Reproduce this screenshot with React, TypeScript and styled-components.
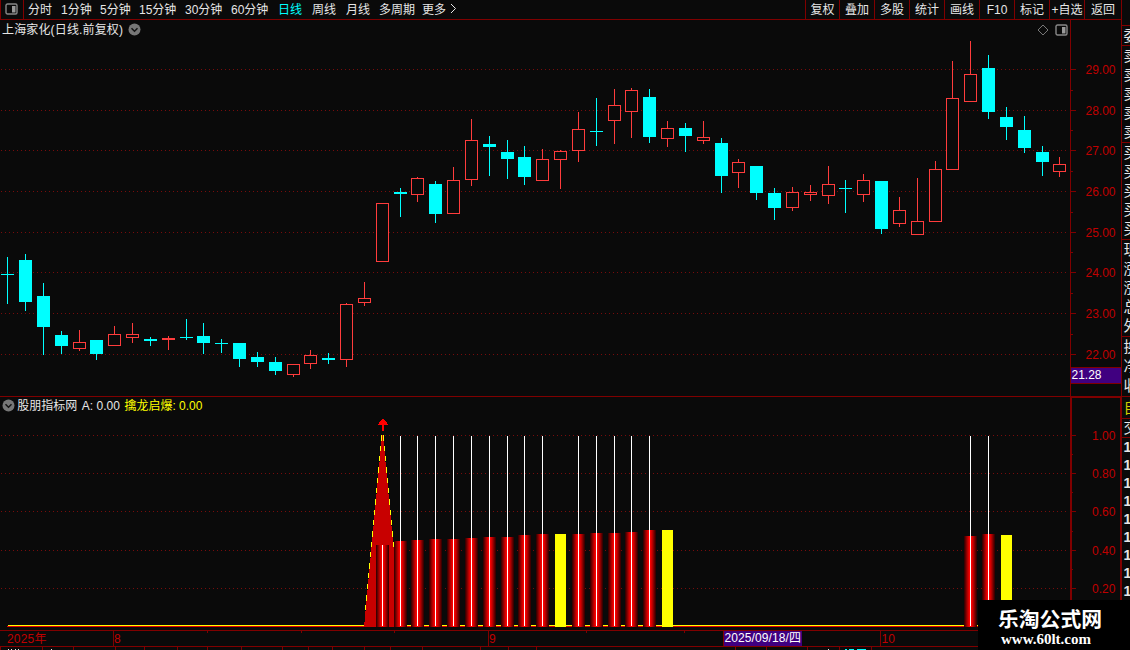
import styled, { createGlobalStyle } from 'styled-components';

const BG = '#0a0a0a';
const LINE = '#800000';
const UP = '#ff3c3c';
const DOWN = '#00ffff';
const LABEL = '#c00000';
const FONT = "'Liberation Sans', 'Noto Sans CJK SC', sans-serif";

const GlobalStyle = createGlobalStyle`
  body {
    margin: 0;
    overflow: hidden;
    background: ${BG};
  }

  * {
    box-sizing: border-box;
  }
`;

const Screen = styled.div`
  position: relative;
  display: flex;
  width: 1130px;
  height: 650px;
  overflow: hidden;
  background: ${BG};
  color: #e6e6e6;
  font: 12px/16px ${FONT};
  white-space: nowrap;

  svg {
    display: block;
    flex: none;
  }
`;

const Terminal = styled.div`
  display: flex;
  flex-direction: column;
  flex: none;
  width: 1121px;
`;

const Toolbar = styled.div`
  display: flex;
  flex: none;
  height: 20px;
  border-bottom: 1px solid ${LINE};
  border-left: 1px solid ${LINE};
  line-height: 20px;
`;

const LayoutToggle = styled.div`
  display: flex;
  width: 23px;
  padding: 3px 0 0 4px;
  border-right: 1px solid ${LINE};
`;

const PeriodList = styled.div`
  display: flex;
  flex: 1;
  padding-left: 4px;
`;

const Period = styled.span<{ $width: number; $active?: boolean }>`
  flex: none;
  width: ${({ $width }) => $width}px;
  color: ${({ $active }) => ($active ? DOWN : '#e6e6e6')};
`;

const Tool = styled.div<{ $width: number }>`
  width: ${({ $width }) => $width}px;
  border-left: 1px solid ${LINE};
  text-align: center;
`;

const Panel = styled.div<{ $height: number }>`
  display: flex;
  flex: none;
  height: ${({ $height }) => $height}px;
`;

const PricePanel = styled(Panel)`
  border-bottom: 1px solid ${LINE};
`;

const Plot = styled.div`
  display: flex;
  flex-direction: column;
  width: 1070px;
`;

const PlotTitle = styled.div<{ $height: number }>`
  display: flex;
  align-items: center;
  flex: none;
  height: ${({ $height }) => $height}px;
  padding-left: 2px;
`;

const TitleText = styled.span<{ $color?: string; $gap?: number; $spacing?: number }>`
  margin-right: ${({ $gap = 4.5 }) => $gap}px;
  color: ${({ $color = '#e6e6e6' }) => $color};
  letter-spacing: ${({ $spacing = 0 }) => $spacing}px;
`;

const TitleTools = styled.div`
  display: flex;
  align-items: center;
  gap: 6px;
  margin-left: auto;
  padding-right: 2px;
`;

const QuoteStrip = styled.div`
  flex: none;
  width: 9px;
  overflow: hidden;
  border-left: 1px solid ${LINE};
`;

const QuoteGroup = styled.div<{ $height: number; $color?: string }>`
  display: flex;
  flex-direction: column;
  justify-content: space-around;
  height: ${({ $height }) => $height}px;
  padding-left: 1.5px;
  border-bottom: 1px solid ${LINE};
  color: ${({ $color = '#e6e6e6' }) => $color};
  font-size: 15px;
  line-height: 18px;
`;

const TickList = styled.div`
  padding-left: 1.5px;
  font-size: 14px;
  font-weight: bold;
  line-height: 18px;
`;

const Watermark = styled.div`
  position: absolute;
  right: 0;
  bottom: 0;
  width: 152px;
  height: 50px;
  padding: 7px 0 0 20px;
  background: #000;
  color: #fff;
`;

const SiteName = styled.div`
  font: bold 20.8px/23px 'Noto Sans CJK SC', sans-serif;
`;

const SiteUrl = styled.div`
  padding-left: 3px;
  font: bold 15px/18px 'Liberation Serif', serif;
`;

type Candle = [x: number, high: number, top: number, bottom: number, low: number, up: 0 | 1];

const candles: Candle[] = [
  [7, 257, 274, 275, 304, 0],
  [25, 254, 260, 302, 311, 0],
  [43, 283, 296, 327, 355, 0],
  [61, 331, 335, 346, 354, 0],
  [79, 330, 342, 349, 351, 1],
  [96, 340, 340, 354, 360, 0],
  [114, 326, 334, 346, 346, 1],
  [132, 323, 334, 338, 343, 1],
  [150, 337, 339, 341, 346, 0],
  [168, 336, 338, 340, 350, 1],
  [186, 319, 337, 338, 340, 0],
  [203, 323, 336, 343, 354, 0],
  [221, 339, 343, 344, 353, 0],
  [239, 343, 343, 359, 367, 0],
  [257, 352, 357, 362, 367, 0],
  [275, 357, 362, 371, 375, 0],
  [293, 364, 364, 375, 377, 1],
  [310, 350, 355, 364, 369, 1],
  [328, 353, 358, 360, 364, 0],
  [346, 303, 304, 360, 367, 1],
  [364, 282, 298, 303, 306, 1],
  [382, 203, 203, 262, 262, 1],
  [400, 188, 192, 194, 217, 0],
  [417, 177, 178, 195, 202, 1],
  [435, 181, 184, 214, 223, 0],
  [453, 167, 180, 214, 214, 1],
  [471, 119, 140, 180, 186, 1],
  [489, 136, 144, 147, 176, 0],
  [507, 140, 152, 159, 179, 0],
  [524, 146, 157, 177, 185, 0],
  [542, 149, 159, 181, 181, 1],
  [560, 150, 151, 160, 189, 1],
  [578, 112, 129, 151, 162, 1],
  [596, 98, 131, 132, 146, 0],
  [614, 89, 105, 121, 144, 1],
  [631, 88, 90, 112, 138, 1],
  [649, 89, 97, 137, 143, 0],
  [667, 121, 128, 139, 147, 1],
  [685, 123, 128, 136, 152, 0],
  [703, 121, 137, 141, 144, 1],
  [721, 138, 143, 176, 193, 0],
  [738, 159, 162, 173, 188, 1],
  [756, 166, 166, 193, 200, 0],
  [774, 188, 193, 208, 220, 0],
  [792, 187, 192, 208, 211, 1],
  [810, 185, 192, 195, 201, 1],
  [828, 166, 184, 196, 204, 1],
  [845, 180, 188, 189, 213, 0],
  [863, 174, 180, 195, 202, 1],
  [881, 181, 181, 229, 234, 0],
  [899, 197, 210, 224, 227, 1],
  [917, 178, 221, 235, 235, 1],
  [935, 161, 169, 222, 222, 1],
  [952, 61, 98, 170, 170, 1],
  [970, 41, 74, 102, 102, 1],
  [988, 55, 68, 112, 119, 0],
  [1006, 107, 117, 127, 140, 0],
  [1024, 116, 130, 148, 153, 0],
  [1042, 146, 152, 162, 176, 0],
  [1059, 157, 164, 172, 177, 1],
];

const redBars: [x: number, top: number][] = [
  [382, 545],
  [400, 541],
  [417, 540],
  [435, 539],
  [453, 539],
  [471, 538],
  [489, 537],
  [507, 537],
  [524, 535],
  [542, 534],
  [578, 534],
  [596, 533],
  [614, 533],
  [631, 532],
  [649, 530],
  [970, 536],
  [988, 534],
];

const yellowBars: [x: number, top: number][] = [
  [555, 534],
  [662, 530],
  [1001, 535],
];

const priceTicks: [y: number, label: string][] = [
  [69, '29.00'],
  [110, '28.00'],
  [150, '27.00'],
  [191, '26.00'],
  [232, '25.00'],
  [272, '24.00'],
  [313, '23.00'],
  [354, '22.00'],
];

const indicatorTicks: [y: number, label: string][] = [
  [435, '1.00'],
  [473, '0.80'],
  [511, '0.60'],
  [550, '0.40'],
  [588, '0.20'],
];

const periods: [label: string, width: number][] = [
  ['分时', 33],
  ['1分钟', 39],
  ['5分钟', 39],
  ['15分钟', 46],
  ['30分钟', 46],
  ['60分钟', 47],
  ['日线', 34],
  ['周线', 34],
  ['月线', 33],
  ['多周期', 43],
  ['更多', 28],
];

const tools: [label: string, width: number][] = [
  ['复权', 34],
  ['叠加', 35],
  ['多股', 35],
  ['统计', 35],
  ['画线', 35],
  ['F10', 35],
  ['标记', 35],
  ['+自选', 35],
  ['返回', 37],
];

// shades of a histogram bar, left edge to centre
const barShades = ['#3c0000', '#640000', '#8c0000', '#b40000', '#d80000', '#f80000', '#ff0000'];

const SplitIcon = () => (
  <svg width='13' height='12' viewBox='0 0 13 12'>
    <rect x='1' y='1' width='11' height='10' rx='1.5' fill='none' stroke='#888' strokeWidth='1.4' />
    <rect x='7' y='3' width='3.5' height='6.5' fill='#999' />
  </svg>
);

const DiamondIcon = () => (
  <svg width='12' height='12' viewBox='0 0 12 12'>
    <path d='M6 1 L11 6 L6 11 L1 6 Z' fill='none' stroke='#777' />
  </svg>
);

const DropIcon = () => (
  <svg width='13' height='13' viewBox='0 0 13 13'>
    <circle cx='6.5' cy='6.5' r='6' fill='#777' />
    <path d='M3.5 5.2 L6.5 8.2 L9.5 5.2' fill='none' stroke='#141414' strokeWidth='1.5' />
  </svg>
);

const MoreIcon = () => (
  <svg width='8' height='18' viewBox='0 0 8 18'>
    <path d='M1 4 L5.5 8.5 L1 13' fill='none' stroke='#e6e6e6' />
  </svg>
);

const GridLine = ({ y }: { y: number }) => (
  <line x1='1' x2='1067' y1={y + 0.5} y2={y + 0.5} stroke='#780c0c' strokeDasharray='1 3' />
);

const CandleShape = ({ candle }: { candle: Candle }) => {
  const [x, high, top, bottom, low, up] = candle;
  const color = up ? UP : DOWN;
  const hollow = up && bottom - top > 2;

  return (
    <g>
      <rect x={x} y={high} width='1' height={low - high} fill={color} />
      <rect x={x - 6} y={top} width='13' height={bottom - top} fill={color} />
      {hollow && <rect x={x - 5} y={top + 1} width='11' height={bottom - top - 2} fill={BG} />}
    </g>
  );
};

const PriceChart = () => (
  <svg width='1070' height='357' viewBox='0 39 1070 357' shapeRendering='crispEdges'>
    {priceTicks.map(([y]) => (
      <GridLine key={y} y={y} />
    ))}
    {candles.map((candle) => (
      <CandleShape key={candle[0]} candle={candle} />
    ))}
  </svg>
);

const PriceAxis = () => (
  <svg width='51' height='376' viewBox='1070 20 51 376' fontFamily={FONT} fontSize='12'>
    <g fill={LINE} shapeRendering='crispEdges'>
      <rect x='1070' y='20' width='1' height='376' />
      {priceTicks.map(([y]) => (
        <rect key={y} x='1071' y={y} width='5' height='1' />
      ))}
      {[90, 130, 171, 212, 252, 293, 334].map((y) => (
        <rect key={y} x='1071' y={y} width='2' height='1' />
      ))}
      <rect x='1071' y='367' width='50' height='17' />
      <rect x='1071' y='368' width='50' height='15' fill='#400080' />
    </g>
    {priceTicks.map(([y, label]) => (
      <text key={y} x='1085.5' y={y + 5} fill={LABEL}>
        {label}
      </text>
    ))}
    <text x='1071.5' y='379' fill='#fff'>
      21.28
    </text>
  </svg>
);

const IndicatorChart = () => (
  <svg width='1070' height='216' viewBox='0 414 1070 216' shapeRendering='crispEdges'>
    {indicatorTicks.map(([y]) => (
      <GridLine key={y} y={y} />
    ))}
    <rect x='8' y='625' width='1062' height='1' fill='#ffff00' />
    <rect x='7' y='626' width='1063' height='1' fill='#e00000' />

    <polygon points='382,435 383,435 401,627 364,627' fill='#c80000' />
    {Array.from({ length: 17 }, (_, i) => (
      <rect key={i} x={381 - i} y={Math.round(435 + i * 10.65)} width='1' height={i % 3 ? 5 : 6} fill='#ffff00' />
    ))}
    {Array.from({ length: 11 }, (_, i) => (
      <rect key={i} x={383 + i} y={Math.round(435 + i * 10.65)} width='1' height={i % 3 ? 5 : 6} fill='#ffff00' />
    ))}

    {redBars.map(([x, top]) => (
      <g key={x}>
        {barShades.map((shade, i) => (
          <rect key={shade} x={x - 6 + i} y={top} width={13 - i * 2} height={627 - top} fill={shade} />
        ))}
        <rect x={x} y={x === 382 ? 545 : 436} width='1' height={x === 382 ? 81 : 190} fill='#fff' />
      </g>
    ))}
    {yellowBars.map(([x, top]) => (
      <rect key={x} x={x} y={top} width='11' height={627 - top} fill='#ffff00' />
    ))}

    <path d='M382 419 H384 V420 H385 V421 H386 V422 H387 V424 H388 V425 H384 V431 H382 V425 H378 V424 H379 V422 H380 V421 H381 V420 H382 Z' fill='#ff0000' />
  </svg>
);

const IndicatorAxis = () => (
  <svg width='51' height='233' viewBox='1070 397 51 233' fontFamily={FONT} fontSize='12'>
    <g fill={LINE} shapeRendering='crispEdges'>
      <rect x='1070' y='397' width='2' height='233' />
      <rect x='1120' y='397' width='1' height='233' />
      <rect x='1070' y='397' width='51' height='1' />
      {indicatorTicks.map(([y]) => (
        <rect key={y} x='1072' y={y} width='4' height='1' />
      ))}
      {[454, 492, 531, 569].map((y) => (
        <rect key={y} x='1072' y={y} width='1' height='1' />
      ))}
    </g>
    {indicatorTicks.map(([y, label]) => (
      <text key={y} x='1092' y={y + 5} fill={LABEL}>
        {label}
      </text>
    ))}
  </svg>
);

const DateAxis = () => (
  <svg width='1121' height='20' viewBox='0 630 1121 20' fontFamily={FONT} fontSize='12'>
    <g fill={LINE} shapeRendering='crispEdges'>
      <rect x='0' y='630' width='1121' height='1' />
      <rect x='0' y='646' width='1121' height='1' />
      {[113, 488, 880].map((x) => (
        <rect key={x} x={x} y='631' width='1' height='15' />
      ))}
      {[207, 301, 394, 586, 684].map((x) => (
        <rect key={x} x={x} y='631' width='1' height='2' />
      ))}
      {[0, 42, 73, 115, 144, 177, 207, 241, 282, 308, 332, 364, 390, 422, 480, 508, 536, 735, 766, 807, 839, 871].map((x) => (
        <rect key={x} x={x} y='647' width='1' height='3' />
      ))}
      <rect x='723' y='631' width='79' height='15' fill='#400080' />
      <rect x='723' y='631' width='1' height='15' />
    </g>
    <g fill={LABEL}>
      <text x='7' y='643' letterSpacing='0.2'>
        2025年
      </text>
      <text x='114' y='643'>
        8
      </text>
      <text x='489' y='643'>
        9
      </text>
      <text x='881.5' y='643'>
        10
      </text>
    </g>
    <text x='724.5' y='642' fill='#fff' letterSpacing='0.1'>
      2025/09/18/四
    </text>
    {/* tops of the tab captions under the date axis */}
    <g fill='#e6e6e6' shapeRendering='crispEdges'>
      <path d='M8 649h1v1h-1z M11 649h1v1h-1z M15 649h1v1h-1z M18 649h1v1h-1z M51 649h1v1h-1z M828 649h1v1h-1z' />
      <path d='M845 649h2v1h-2z M849 649h5v1h-5z M857 649h9v1h-9z' fill={DOWN} />
    </g>
  </svg>
);

const QuoteColumn = () => (
  <QuoteStrip>
    <QuoteGroup $height={26} />
    <QuoteGroup $height={20}>
      <span>委</span>
    </QuoteGroup>
    <QuoteGroup $height={97}>
      {[5, 4, 3, 2, 1].map((n) => (
        <span key={n}>卖</span>
      ))}
    </QuoteGroup>
    <QuoteGroup $height={97}>
      {[1, 2, 3, 4, 5].map((n) => (
        <span key={n}>买</span>
      ))}
    </QuoteGroup>
    <QuoteGroup $height={97}>
      {['现', '涨', '涨', '总', '外'].map((label, i) => (
        <span key={i}>{label}</span>
      ))}
    </QuoteGroup>
    <QuoteGroup $height={60}>
      {['换', '净', '收'].map((label) => (
        <span key={label}>{label}</span>
      ))}
    </QuoteGroup>
    <QuoteGroup $height={22} $color='#d0d000'>
      <span>自</span>
    </QuoteGroup>
    <QuoteGroup $height={19}>
      <span>交</span>
    </QuoteGroup>
    <TickList>
      {Array.from({ length: 9 }, (_, i) => (
        <div key={i}>1</div>
      ))}
    </TickList>
  </QuoteStrip>
);

export default function App() {
  return (
    <Screen>
      <GlobalStyle />
      <Terminal>
        <Toolbar>
          <LayoutToggle>
            <SplitIcon />
          </LayoutToggle>
          <PeriodList>
            {periods.map(([label, width]) => (
              <Period key={label} $width={width} $active={label === '日线'}>
                {label}
              </Period>
            ))}
            <MoreIcon />
          </PeriodList>
          {tools.map(([label, width]) => (
            <Tool key={label} $width={width}>
              {label}
            </Tool>
          ))}
        </Toolbar>

        <PricePanel $height={377}>
          <Plot>
            <PlotTitle $height={19}>
              <TitleText $spacing={0.15}>上海家化(日线.前复权)</TitleText>
              <DropIcon />
              <TitleTools>
                <DiamondIcon />
                <SplitIcon />
              </TitleTools>
            </PlotTitle>
            <PriceChart />
          </Plot>
          <PriceAxis />
        </PricePanel>

        <Panel $height={233}>
          <Plot>
            <PlotTitle $height={17}>
              <DropIcon />
              <TitleText $gap={-1}>&nbsp;</TitleText>
              <TitleText>股朋指标网</TitleText>
              <TitleText>A: 0.00</TitleText>
              <TitleText $color='#ffff00'>擒龙启爆: 0.00</TitleText>
            </PlotTitle>
            <IndicatorChart />
          </Plot>
          <IndicatorAxis />
        </Panel>

        <DateAxis />
      </Terminal>

      <QuoteColumn />

      <Watermark>
        <SiteName>乐淘公式网</SiteName>
        <SiteUrl>www.60lt.com</SiteUrl>
      </Watermark>
    </Screen>
  );
}
